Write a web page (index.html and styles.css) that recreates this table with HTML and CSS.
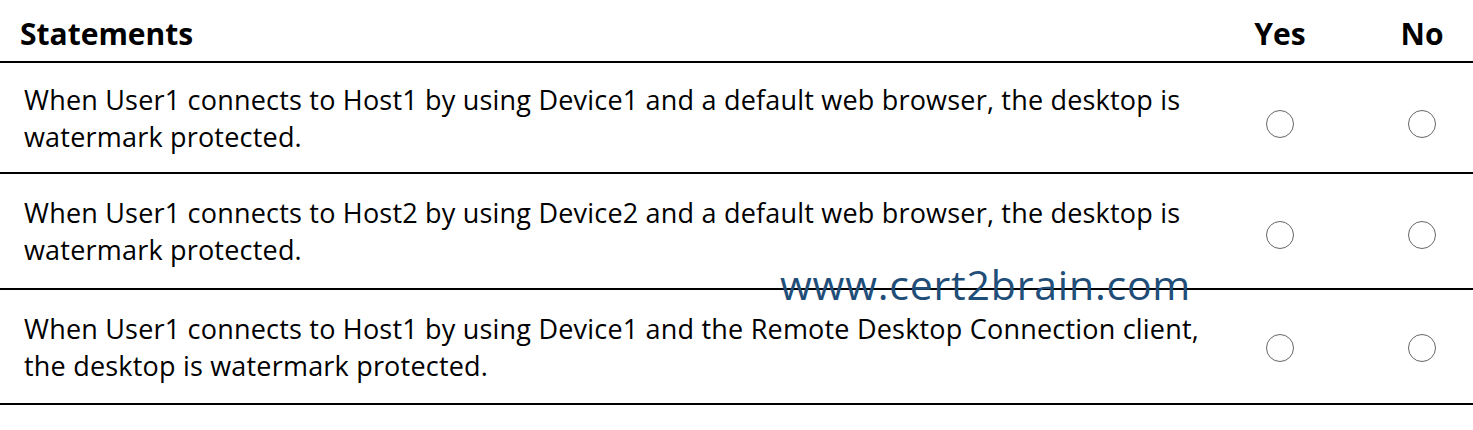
FILE: index.html
```html
<!DOCTYPE html>
<html lang="en">
<head>
  <meta charset="UTF-8" />
  <title>Statements</title>
  <link rel="stylesheet" href="styles.css">
</head>
<body>
  <div class="quiz">
    <div class="row head">
      <div class="stmt">Statements</div>
      <div class="opt">Yes</div>
      <div class="opt no">No</div>
    </div>

    <div class="row first">
      <div class="stmt">When User1 connects to Host1 by using Device1 and a default web browser, the desktop is watermark protected.</div>
      <div class="opt"><span class="radio"></span></div>
      <div class="opt no"><span class="radio"></span></div>
    </div>

    <div class="row">
      <div class="stmt">When User1 connects to Host2 by using Device2 and a default web browser, the desktop is watermark protected.</div>
      <div class="opt"><span class="radio"></span></div>
      <div class="opt no"><span class="radio"></span></div>
    </div>

    <div class="row last">
      <div class="stmt">When User1 connects to Host1 by using Device1 and the Remote Desktop Connection client, the desktop is watermark protected.</div>
      <div class="opt"><span class="radio"></span></div>
      <div class="opt no"><span class="radio"></span></div>
    </div>

    <div class="watermark">www.cert2brain.com</div>
  </div>
</body>
</html>
```

FILE: styles.css
```css
body {
  margin: 0;
  background: #fff;
  color: #000;
  font-family: "Open Sans", sans-serif;
}

.quiz {
  position: relative;
  width: 1473px;
}

.row {
  display: grid;
  grid-template-columns: 1fr 130px 128px;
  border-bottom: 2px solid #000;
  height: 114px;
  align-items: center;
}

.row.first {
  height: 109px;
}

.row.last {
  height: 113px;
}

.row.head {
  height: 61px;
  align-items: end;
  font-weight: bold;
}

.head .stmt,
.head .opt {
  padding-bottom: 11px;
  font-size: 30px;
  line-height: 32px;
}

.stmt {
  padding-left: 24px;
  font-size: 27px;
  letter-spacing: 0.2px;
  line-height: 37px;
}

.head .stmt {
  padding-left: 20px;
  letter-spacing: 0;
}

.opt {
  display: flex;
  justify-content: center;
}

.opt.no {
  padding-left: 26px;
}

.radio {
  width: 26px;
  height: 26px;
  border: 1px solid #666;
  border-radius: 50%;
  margin-top: 8px;
}

.first .radio {
  margin-top: 12px;
}

.last .radio {
  margin-top: 2px;
}

.watermark {
  position: absolute;
  left: 780px;
  top: 256px;
  font-size: 41px;
  color: #1f4e79;
  letter-spacing: 0.8px;
}
```
